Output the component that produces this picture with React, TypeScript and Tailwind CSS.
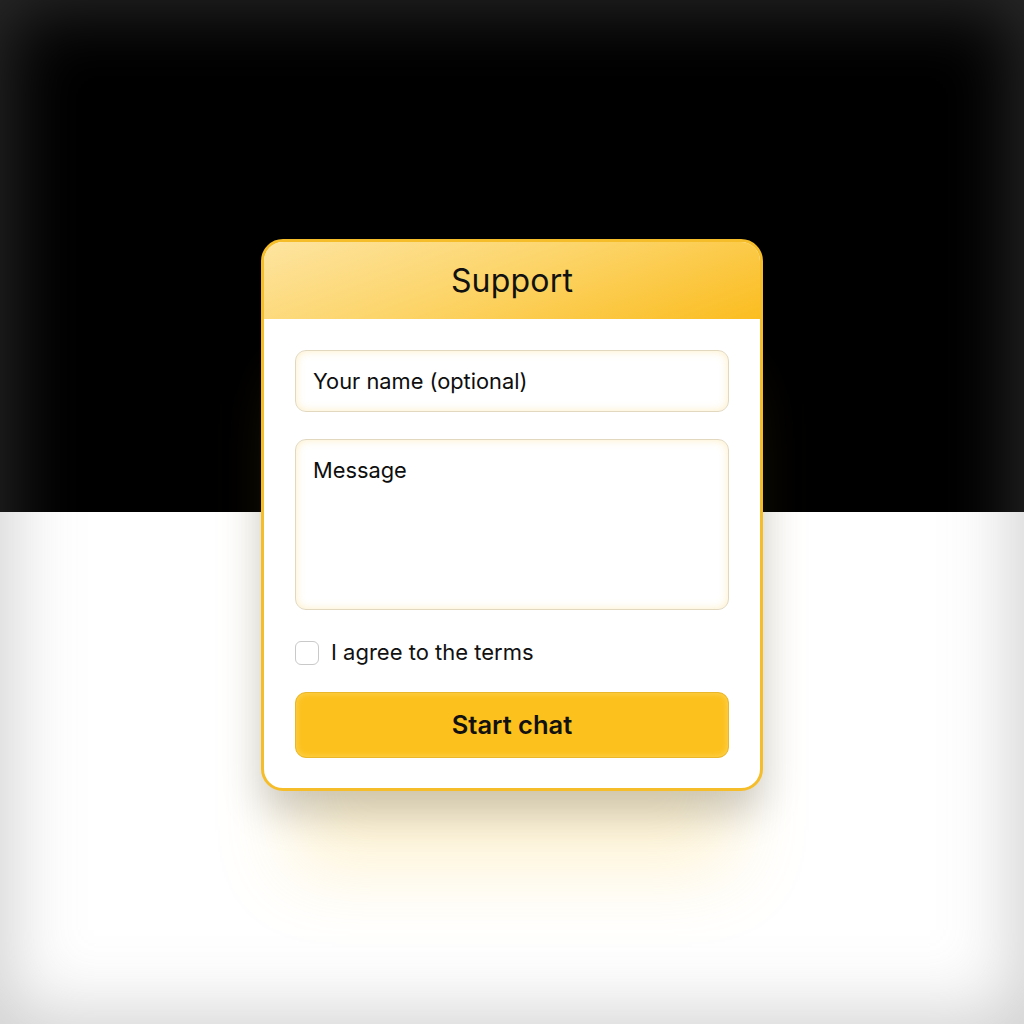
export default function App() {
  return (
    <div
      className="relative w-full h-screen flex items-center justify-center bg-[linear-gradient(to_bottom,#000_0%,#000_50%,#fff_50%,#fff_100%)] shadow-[inset_0_0_70px_10px_rgba(120,120,120,0.35)]"
      style={{ fontFamily: 'Inter, "Noto Sans", sans-serif' }}
    >
      <div className="w-[502px] h-[552px] mt-[6px] rounded-[22px] border-[3px] border-[#f6bd2a] bg-white overflow-hidden flex flex-col shadow-[0_22px_40px_rgba(0,0,0,0.2),0_110px_70px_-30px_rgba(252,200,60,0.22)]">
        <div className="h-[77px] shrink-0 flex items-center justify-center bg-[linear-gradient(160deg,#fde4a0_0%,#fcd56b_45%,#fbbd20_100%)]">
          <h1 className="text-[32px] text-[#111] tracking-[0.2px] leading-none">Support</h1>
        </div>
        <div className="flex flex-col px-[31px] pt-[31px]">
          <div className="h-[62px] rounded-[11px] border border-[#e2d8c0] shadow-[inset_0_0_8px_rgba(250,215,120,0.45)] flex items-center px-[17px]">
            <span className="text-[21.8px] text-[#0e0e0e]">Your name (optional)</span>
          </div>
          <div className="mt-[27px] h-[171px] rounded-[11px] border border-[#e2d8c0] shadow-[inset_0_0_8px_rgba(250,215,120,0.45)] px-[17px] pt-[14px]">
            <span className="text-[21.8px] text-[#0e0e0e]">Message</span>
          </div>
          <label className="mt-[31px] flex items-center gap-[12px] h-[23px]">
            <span className="w-[24px] h-[24px] rounded-[6px] border border-[#c9c9c9] bg-white" />
            <span className="text-[22px] text-[#111]">I agree to the terms</span>
          </label>
          <button className="mt-[28px] h-[66px] rounded-[11px] bg-[#fcc11d] border border-[#eab72a] shadow-[inset_0_0_6px_rgba(255,230,140,0.6)] flex items-center justify-center">
            <span className="text-[25.5px] font-semibold text-[#111]">Start chat</span>
          </button>
        </div>
      </div>
    </div>
  );
}
